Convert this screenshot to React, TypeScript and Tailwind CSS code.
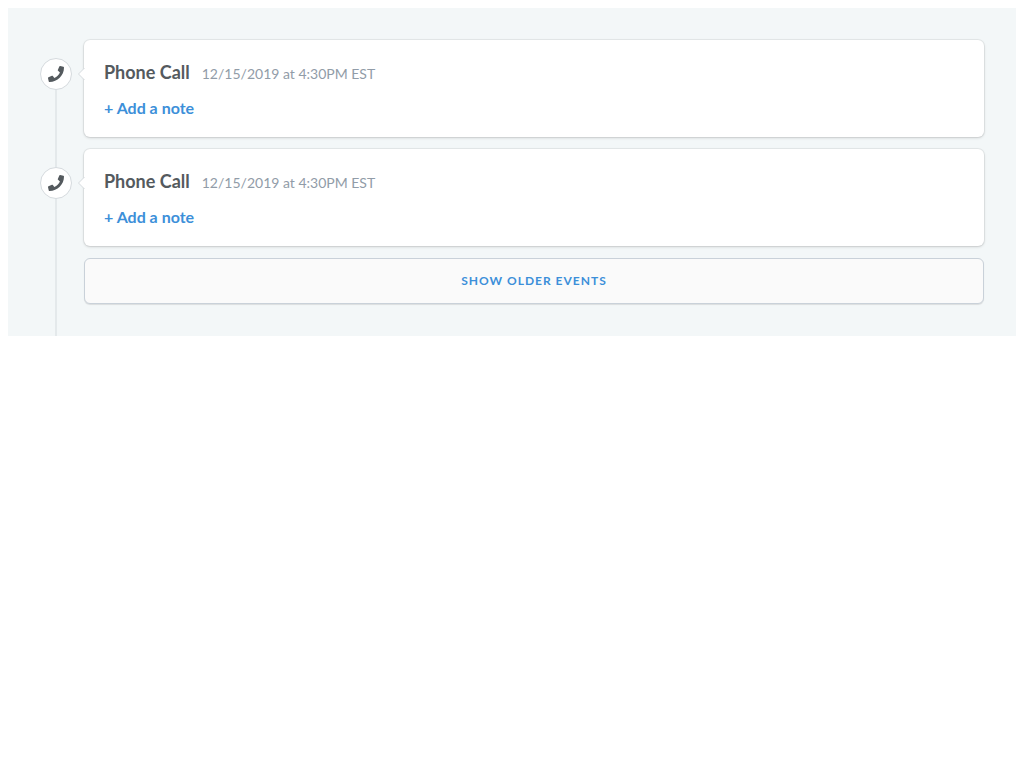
import { FaPhone } from "react-icons/fa";

type TimelineEvent = { id: number; title: string; time: string };

const events: TimelineEvent[] = [
  { id: 1, title: "Phone Call", time: "12/15/2019 at 4:30PM EST" },
  { id: 2, title: "Phone Call", time: "12/15/2019 at 4:30PM EST" },
];

function EventItem({ event, first }: { event: TimelineEvent; first: boolean }) {
  return (
    <li className="flex gap-3">
      <div className="relative flex w-8 shrink-0 justify-center">
        <span
          className={`absolute -bottom-3 left-[15px] w-0.5 bg-[#e4e9eb] ${first ? "top-[34px]" : "top-0"}`}
        />
        <span className="relative mt-[18px] flex size-8 items-center justify-center rounded-full border border-[#d5dade] bg-white text-[#545a5e]">
          <FaPhone size={16} aria-hidden="true" />
        </span>
      </div>
      <article className="relative min-w-0 grow rounded-md bg-white px-5 pt-5 pb-[17px] shadow-[0_0_0_1px_rgba(0,0,0,0.05),0_1px_3px_0_rgba(0,0,0,0.15)]">
        <svg
          className="absolute top-[27px] -left-1.5 h-3.5 w-2"
          viewBox="0 0 8 14"
          aria-hidden="true"
        >
          <path d="M7 0.5 L0.5 7 L7 13.5 H8 V0.5 Z" fill="#fff" />
          <path d="M6.5 1 L0.5 7 L6.5 13" fill="none" stroke="#d5dade" />
        </svg>
        <header className="flex flex-wrap items-baseline gap-x-3">
          <h2 className="text-lg leading-6 font-bold text-[#545a5e]">{event.title}</h2>
          <time className="text-sm leading-6 text-[#919ca8]">{event.time}</time>
        </header>
        <button
          type="button"
          className="mt-2.5 block cursor-pointer text-base leading-6 font-bold text-[#3c8fd9]"
        >
          + Add a note
        </button>
      </article>
    </li>
  );
}

export default function App() {
  return (
    <main className="m-2 bg-[#f3f7f8] px-8 font-['Lato',sans-serif]">
      <ol className="flex flex-col gap-3 pt-8">
        {events.map((event, i) => (
          <EventItem key={event.id} event={event} first={i === 0} />
        ))}
      </ol>
      <div className="flex gap-3">
        <div className="flex w-8 shrink-0 justify-center">
          <span className="w-0.5 bg-[#e4e9eb]" />
        </div>
        <div className="grow pt-3 pb-8">
          <button
            type="button"
            className="block h-[46px] w-full cursor-pointer rounded-md border border-[#c9d1d9] bg-[#fafafa] text-xs font-bold tracking-[1px] text-[#3c8fd9] uppercase shadow-[0_1px_1px_0_rgba(0,0,0,0.1)]"
          >
            Show older events
          </button>
        </div>
      </div>
    </main>
  );
}
